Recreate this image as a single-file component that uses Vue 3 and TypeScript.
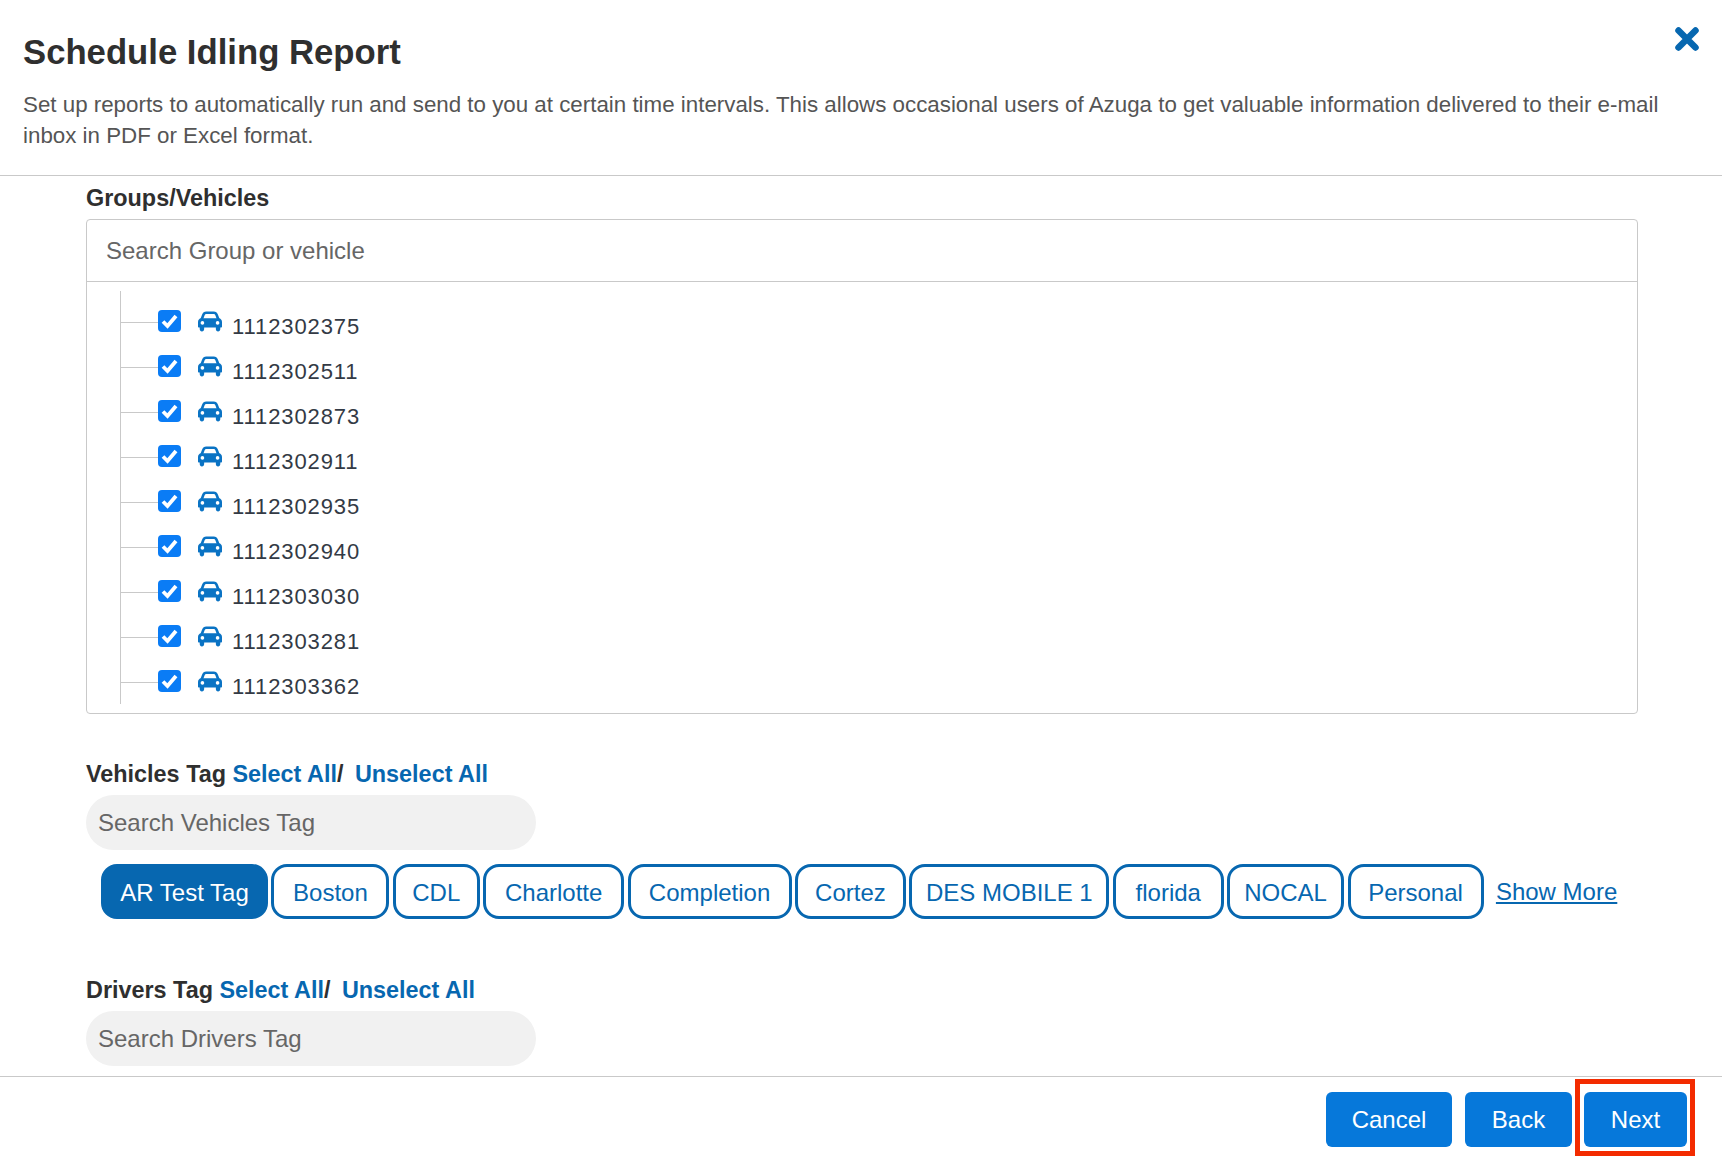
<template>
  <div class="modal">
    <header class="head">
      <h1 class="title">Schedule Idling Report</h1>
      <p class="desc">
        Set up reports to automatically run and send to you at certain time intervals. This allows occasional users of Azuga to get valuable information delivered to their e-mail<br />inbox in PDF or Excel format.
      </p>
      <button class="close" aria-label="Close">
        <svg width="26" height="26" viewBox="0 0 26 26">
          <path d="M4.5 4.5 L21.5 21.5 M21.5 4.5 L4.5 21.5" stroke="#0767b0" stroke-width="6.5" stroke-linecap="round" />
        </svg>
      </button>
    </header>

    <main class="body">
      <div class="label">Groups/Vehicles</div>
      <div class="tree-box">
        <div class="tree-search">Search Group or vehicle</div>
        <ul class="tree">
          <li v-for="id in vehicles" :key="id" class="tree-row">
            <span class="tick"></span>
            <span class="check">
              <svg width="17" height="15" viewBox="0 0 17 15">
                <path d="M2 7.5 L6.5 12 L15 2" fill="none" stroke="#fff" stroke-width="3.8" />
              </svg>
            </span>
            <svg class="car" width="24" height="21" viewBox="0 0 25 21">
              <path d="M3.6 9 L5.6 3.6 C6.1 2.2 7.1 1.4 8.6 1.4 H16.4 C17.9 1.4 18.9 2.2 19.4 3.6 L21.4 9" fill="none" stroke="#0a73c4" stroke-width="2.8" />
              <path d="M3.4 7 H21.6 C23.6 7 25 8.8 25 11 V15.8 C25 16.4 24.5 16.8 24 16.8 H23.2 V18.4 C23.2 19.8 22.3 20.8 20.9 20.8 C19.5 20.8 18.6 19.8 18.6 18.4 V16.8 H6.4 V18.4 C6.4 19.8 5.5 20.8 4.1 20.8 C2.7 20.8 1.8 19.8 1.8 18.4 V16.8 H1 C.5 16.8 0 16.4 0 15.8 V11 C0 8.8 1.4 7 3.4 7 Z" fill="#0a73c4" />
              <circle cx="4.6" cy="12" r="1.9" fill="#fff" />
              <circle cx="20.4" cy="12" r="1.9" fill="#fff" />
            </svg>
            <span class="vid">{{ id }}</span>
          </li>
        </ul>
      </div>

      <div class="label tag-label">
        Vehicles Tag <a class="link">Select All</a>/ <a class="link second">Unselect All</a>
      </div>
      <div class="pill-input">Search Vehicles Tag</div>
      <div class="tags">
        <span
          v-for="(t, i) in tags"
          :key="t.name"
          class="tag"
          :class="{ active: i === 0 }"
          :style="{ width: t.width + 'px' }"
        >{{ t.name }}</span>
        <a class="more">Show More</a>
      </div>

      <div class="label tag-label drivers">
        Drivers Tag <a class="link">Select All</a>/ <a class="link second">Unselect All</a>
      </div>
      <div class="pill-input">Search Drivers Tag</div>
    </main>

    <footer class="foot">
      <button class="btn cancel">Cancel</button>
      <button class="btn back">Back</button>
      <button class="btn next">
        Next
        <span class="highlight"></span>
      </button>
    </footer>
  </div>
</template>

<script setup lang="ts">
const vehicles: string[] = [
  '1112302375',
  '1112302511',
  '1112302873',
  '1112302911',
  '1112302935',
  '1112302940',
  '1112303030',
  '1112303281',
  '1112303362',
]

const tags: { name: string; width: number }[] = [
  { name: 'AR Test Tag', width: 167 },
  { name: 'Boston', width: 118 },
  { name: 'CDL', width: 87 },
  { name: 'Charlotte', width: 141 },
  { name: 'Completion', width: 164 },
  { name: 'Cortez', width: 111 },
  { name: 'DES MOBILE 1', width: 200 },
  { name: 'florida', width: 111 },
  { name: 'NOCAL', width: 117 },
  { name: 'Personal', width: 136 },
]
</script>

<style>
html, body { margin: 0; background: #fff; }
</style>

<style scoped>
.modal {
  height: 1162px;
  display: flex;
  flex-direction: column;
  overflow: hidden;
  font-family: "Liberation Sans", Arial, sans-serif;
  color: #333;
}

.head {
  position: relative;
  height: 176px;
  box-sizing: border-box;
  padding: 30px 23px 0;
  border-bottom: 1px solid #c9c9c9;
  flex-shrink: 0;
}
.title {
  margin: 0;
  font-size: 34.7px;
  line-height: 44px;
  font-weight: 700;
  color: #2f2f2f;
}
.desc {
  margin: 15px 0 0;
  font-size: 22.33px;
  line-height: 31px;
  color: #555;
  white-space: nowrap;
}
.close {
  position: absolute;
  top: 26px;
  right: 22px;
  border: 0;
  padding: 0;
  background: none;
  line-height: 0;
}

.body {
  flex: 1;
  min-height: 0;
  overflow: hidden;
  padding: 9px 84px 0 86px;
}
.label {
  font-size: 23.4px;
  line-height: 26px;
  font-weight: 700;
  color: #2f2f2f;
}
.tree-box {
  margin-top: 8px;
  border: 1px solid #c9c9c9;
  border-radius: 4px;
  height: 495px;
  box-sizing: border-box;
}
.tree-search {
  height: 62px;
  box-sizing: border-box;
  padding-left: 19px;
  border-bottom: 1px solid #c9c9c9;
  font-size: 24px;
  line-height: 61px;
  color: #666;
}
.tree {
  list-style: none;
  margin: 9px 0 0 33px;
  padding: 19px 0 0;
  width: 400px;
  border-left: 1px solid #c9c9c9;
  height: 394px;
  box-sizing: content-box;
}
.tree-row {
  height: 45px;
  display: flex;
  align-items: flex-start;
}
.tick {
  width: 37px;
  height: 1px;
  margin-top: 12px;
  background: #c9c9c9;
}
.check {
  width: 23px;
  height: 22px;
  border-radius: 4px;
  background: #0a7cf5;
  display: flex;
  align-items: center;
  justify-content: center;
}
.car {
  margin-left: 17px;
  margin-top: 1px;
  flex-shrink: 0;
}
.vid {
  margin-left: 10px;
  margin-top: 4px;
  font-size: 22px;
  line-height: 26px;
  letter-spacing: .9px;
  color: #333a45;
}

.tag-label { margin-top: 47px; }
.drivers { margin-top: 58px; }
.link {
  color: #0767b0;
}
.second {
  margin-left: 5px;
}
.pill-input {
  margin-top: 8px;
  width: 450px;
  height: 55px;
  border-radius: 28px;
  background: #f1f1f1;
  box-sizing: border-box;
  padding-left: 12px;
  font-size: 24px;
  line-height: 55px;
  color: #666;
}
.tags {
  margin: 14px 0 0 15px;
  display: flex;
  align-items: center;
  gap: 3.4px;
}
.tag {
  height: 55px;
  box-sizing: border-box;
  border: 3px solid #0767b0;
  border-radius: 16px;
  font-size: 24px;
  line-height: 51px;
  text-align: center;
  color: #0767b0;
  white-space: nowrap;
}
.tag.active {
  background: #0767b0;
  color: #fff;
}
.more {
  margin-left: 9px;
  font-size: 24px;
  color: #0767b0;
  text-decoration: underline;
  white-space: nowrap;
}

.foot {
  height: 86px;
  box-sizing: border-box;
  flex-shrink: 0;
  border-top: 1px solid #c9c9c9;
  padding: 15px 35px 0 0;
  display: flex;
  justify-content: flex-end;
  gap: 12px;
}
.btn {
  position: relative;
  height: 55px;
  border: 0;
  border-radius: 6px;
  background: #0678da;
  color: #fff;
  font-family: inherit;
  font-size: 24px;
}
.cancel { width: 126px; margin-right: 1px; }
.back { width: 107px; }
.next { width: 103px; }
.highlight {
  position: absolute;
  left: -9px;
  right: -8px;
  top: -13px;
  bottom: -9px;
  border: 5px solid #f32b00;
}
</style>
